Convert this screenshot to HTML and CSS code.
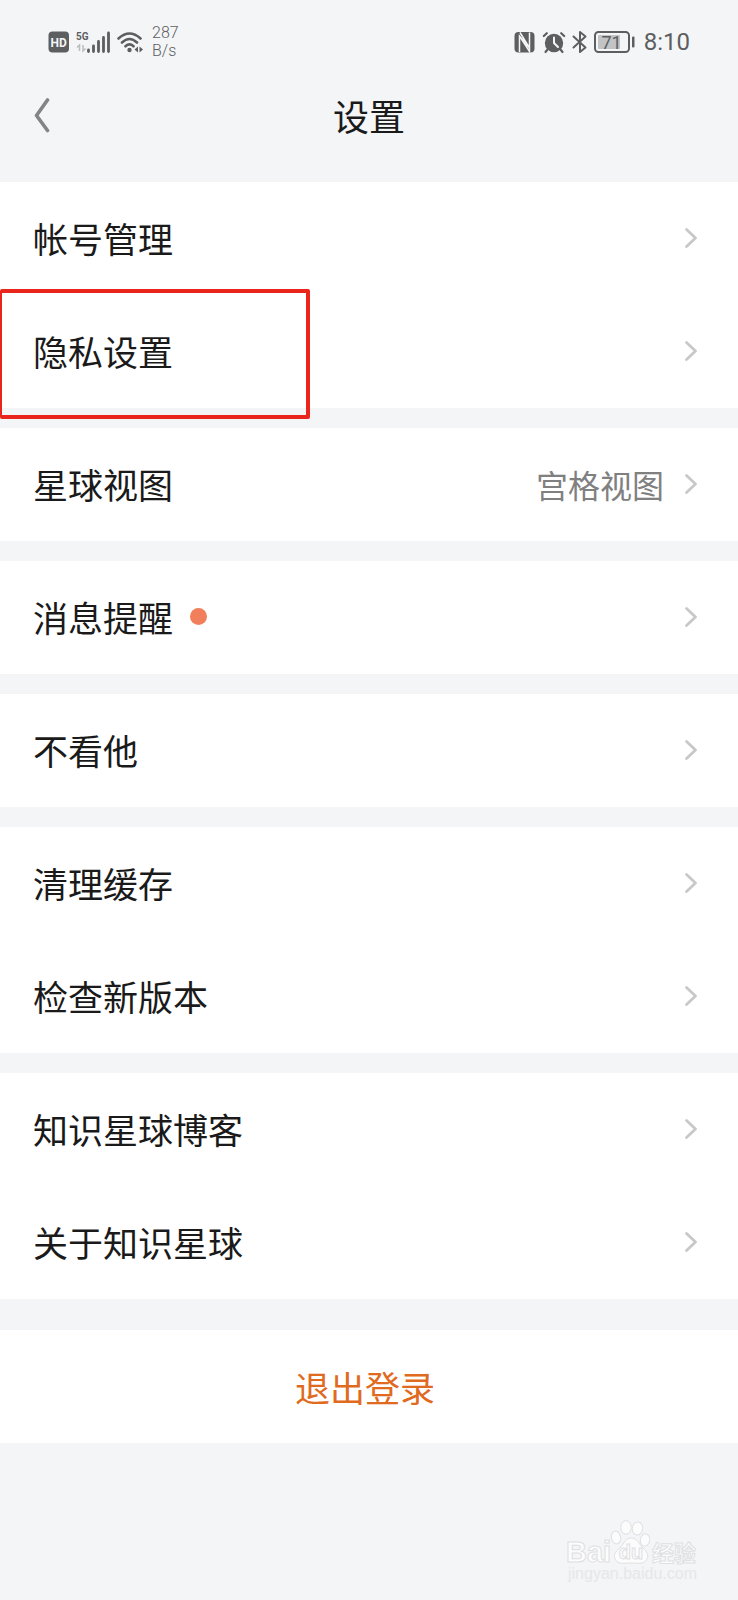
FILE: index.html
```
<!DOCTYPE html>
<html lang="zh-CN">
<head>
    <meta charset="UTF-8">
    <meta name="viewport" content="width=device-width, initial-scale=1">
    <title>设置</title>
    <link rel="stylesheet" href="styles.css">
</head>
<body>
<svg class="defs" width="0" height="0" aria-hidden="true">
    <symbol id="arrow" viewBox="0 0 14 22">
        <path d="M2.500 2.500 11.500 11 2.500 19.500" fill="none" stroke="currentColor" stroke-width="2.800" stroke-linecap="round" stroke-linejoin="round"/>
    </symbol>
</svg>
<div class="page">
    <!-- 状态栏 -->
    <div class="status">
        <div class="status-left">
            <svg width="22" height="22" viewBox="0 0 22 22">
                <rect x="0.500" y="0.500" width="20.500" height="21" rx="4" fill="#5d5e60"/>
                <text class="hd" x="10.700" y="15.500" text-anchor="middle">HD</text>
            </svg>
            <svg class="signal" width="36" height="24" viewBox="0 0 36 24">
                <text class="net" x="0" y="10">5G</text>
                <path d="M3.500 21v-6l-2.500 2.500M7 15v6l2.500-2.500" fill="none" stroke="#bbbcbe" stroke-width="1.500"/>
                <path d="M12.500 20v1.500M17.500 16v5.500M22.500 11.500v10M27.500 7.500v14M32.500 3v18.500" stroke="#5d5e60" stroke-width="2.800" stroke-linecap="round"/>
            </svg>
            <svg class="wifi" width="27" height="24" viewBox="0 0 27 24">
                <path d="M1.500 8.500Q12.500 -1.500 23.500 8.500M5 12.500Q12.500 5.500 20 12.500M8.500 16.300Q12.500 12.500 16.500 16.300" fill="none" stroke="#5d5e60" stroke-width="2.600" stroke-linecap="round"/>
                <circle cx="12.500" cy="20" r="2.200" fill="#5d5e60"/>
                <path d="M21 16.500v6l-3.500-3zM22.500 16.500v6l3.500-3z" fill="#5d5e60"/>
            </svg>
            <div class="speed"><span>287</span><span>B/s</span></div>
        </div>
        <div class="status-right">
            <svg width="22" height="22" viewBox="0 0 22 22">
                <rect x="0.500" y="1" width="20" height="20.500" rx="4" fill="#5d5e60"/>
                <path d="M5.500 21V5L15.500 17V6.500M6 1.500 15.500 17M5.500 5 15.500 20.500V1.500" fill="none" stroke="#f4f5f7" stroke-width="1.500"/>
            </svg>
            <svg width="24" height="23" viewBox="0 0 24 23">
                <circle cx="12" cy="12" r="9.200" fill="#5d5e60"/>
                <path d="M1.800 5 4.800 2.200M22.200 5 19.200 2.200M5.500 18.500 3.500 21M18.500 18.500l2 2.500" stroke="#5d5e60" stroke-width="2.200" stroke-linecap="round"/>
                <path d="M12 6.500V12l4 4" fill="none" stroke="#f4f5f7" stroke-width="2" stroke-linecap="round"/>
            </svg>
            <svg width="16" height="24" viewBox="0 0 16 24">
                <path d="M1.500 6.500 13.500 17.500 8 22V2L13.500 6.500 1.500 17.500" fill="none" stroke="#5d5e60" stroke-width="2" stroke-linejoin="round" stroke-linecap="round"/>
            </svg>
            <svg class="battery" width="42" height="22" viewBox="0 0 42 22">
                <rect x="1" y="1" width="34" height="20" rx="3.500" fill="none" stroke="#5d5e60" stroke-width="2"/>
                <rect x="4" y="4" width="22" height="14" rx="1" fill="#c2c3c5"/>
                <rect x="38" y="5.500" width="2.500" height="11" rx="1" fill="#5d5e60"/>
                <text class="level" x="17.500" y="17.500" text-anchor="middle">71</text>
            </svg>
            <span class="time">8:10</span>
        </div>
    </div>

    <!-- 标题 -->
    <header class="header">
        <button class="back" type="button" aria-label="返回">
            <svg width="16" height="36" viewBox="0 0 16 36">
                <path d="M13.500 3 2.500 18.500 13.500 33.500" fill="none" stroke="#838486" stroke-width="3.600" stroke-linecap="round" stroke-linejoin="round"/>
            </svg>
        </button>
        <h1 class="title">设置</h1>
    </header>

    <!-- 列表 -->
    <main class="list">
        <nav class="group">
            <a class="item" href="#"><span>帐号管理</span><svg class="arrow"><use href="#arrow"/></svg></a>
            <a class="item marked" href="#"><span>隐私设置</span><svg class="arrow"><use href="#arrow"/></svg></a>
        </nav>
        <nav class="group">
            <a class="item" href="#"><span>星球视图</span><span class="value">宫格视图</span><svg class="arrow"><use href="#arrow"/></svg></a>
        </nav>
        <nav class="group">
            <a class="item" href="#"><span>消息提醒</span><i class="dot"></i><svg class="arrow"><use href="#arrow"/></svg></a>
        </nav>
        <nav class="group">
            <a class="item" href="#"><span>不看他</span><svg class="arrow"><use href="#arrow"/></svg></a>
        </nav>
        <nav class="group">
            <a class="item" href="#"><span>清理缓存</span><svg class="arrow"><use href="#arrow"/></svg></a>
            <a class="item" href="#"><span>检查新版本</span><svg class="arrow"><use href="#arrow"/></svg></a>
        </nav>
        <nav class="group">
            <a class="item" href="#"><span>知识星球博客</span><svg class="arrow"><use href="#arrow"/></svg></a>
            <a class="item" href="#"><span>关于知识星球</span><svg class="arrow"><use href="#arrow"/></svg></a>
        </nav>
    </main>
    <button class="logout" type="button">退出登录</button>

    <!-- 水印 -->
    <footer class="mark">
        <svg width="134" height="70" viewBox="0 0 134 70">
            <g fill="#fcfcfd" stroke="#dfe0e2" stroke-width="1">
                <ellipse cx="50" cy="19.500" rx="4.700" ry="6.500" transform="rotate(-12 50 19.500)"/>
                <ellipse cx="60" cy="9.500" rx="5.200" ry="6.800"/>
                <ellipse cx="71.500" cy="10.500" rx="5.200" ry="6.500" transform="rotate(8 71.500 10.500)"/>
                <ellipse cx="79" cy="22" rx="4.700" ry="6.200" transform="rotate(10 79 22)"/>
                <path d="M65 20c6 0 8 6 12 10 4 4 6 7 4 11-3 6-9 4-16 4s-13 2-16-4c-2-4 1-8 5-11 4-4 5-10 11-10z"/>
                <text class="mark-bai" x="0" y="44">Bai</text>
                <text class="mark-cn" x="86" y="43">经验</text>
                <text class="mark-du" x="65" y="41" text-anchor="middle">du</text>
            </g>
            <text class="mark-url" x="2" y="61">jingyan.baidu.com</text>
        </svg>
    </footer>
</div>
</body>
</html>
```
FILE: styles.css
```
* {
    box-sizing: border-box;
}

body {
    margin: 0;
    background: #f4f5f7;
    color: #1a1a1a;
    font-family: "Noto Sans CJK SC", sans-serif;
}

a {
    color: inherit;
    text-decoration: none;
}

button {
    border: 0;
    padding: 0;
    font-family: inherit;
}

svg {
    display: block;
    flex: none;
}

.defs {
    position: absolute;
}

.page {
    display: flex;
    flex-direction: column;
    min-height: 100vh;
}

/* 状态栏 */
.status {
    display: flex;
    justify-content: space-between;
    height: 84px;
    padding: 0 48px;
    color: #5d5e60;
    font-family: Roboto, sans-serif;
}

.status-left,
.status-right {
    display: flex;
    align-items: center;
}

.signal {
    margin-left: 6px;
}

.wifi {
    margin-left: 5px;
}

.speed {
    display: flex;
    flex-direction: column;
    margin-left: 8px;
    font-size: 16px;
    font-weight: 300;
    line-height: 18px;
}

.status-right {
    gap: 6px;
}

.time {
    margin-left: 2px;
    font-size: 24px;
}

.hd {
    fill: #f4f5f7;
    stroke: none;
    font: bold 12px Roboto, sans-serif;
}

.net {
    fill: #5d5e60;
    font: bold 10px Roboto, sans-serif;
}

.level {
    fill: #5d5e60;
    font: 18px Roboto, sans-serif;
}

/* 标题 */
.header {
    display: grid;
    grid-template-columns: 1fr auto 1fr;
    align-items: center;
    height: 98px;
    padding: 0 34px 36px;
}

.back {
    justify-self: start;
    background: none;
}

.title {
    margin: 0;
    font-size: 36px;
    font-weight: 400;
    line-height: 52px;
}

/* 列表 */
.list {
    display: grid;
    gap: 20px;
}

.group {
    background: #fff;
}

.item {
    display: flex;
    align-items: center;
    height: 113px;
    padding: 0 40px 2px 33px;
    font-size: 35px;
}

.arrow {
    width: 14px;
    height: 22px;
    margin-left: auto;
    color: #c8c8c8;
}

.value {
    margin-left: auto;
    color: #808080;
    font-size: 32px;
}

.value + .arrow {
    margin-left: 20px;
}

.dot {
    width: 17px;
    height: 17px;
    margin-left: 17px;
    border-radius: 50%;
    background: #f27f5b;
}

/* 红框标出的一行 */
.marked {
    position: relative;
}

.marked::after {
    content: "";
    position: absolute;
    top: -6px;
    left: 0;
    z-index: 1;
    box-sizing: border-box;
    width: 310px;
    height: 130px;
    border: 4px solid #ea261c;
    border-left-width: 2px;
    border-radius: 2px;
}

.logout {
    height: 113px;
    margin-top: 31px;
    padding: 0 8px 0 0;
    background: #fff;
    color: #e06a20;
    font-size: 35px;
}

/* 水印 */
.mark {
    display: flex;
    justify-content: flex-end;
    margin-top: auto;
    padding: 0 38px 12px;
}

.mark-bai {
    font: bold 29px "Liberation Sans", sans-serif;
}

.mark-cn {
    font: bold 22px "Noto Sans CJK SC", sans-serif;
}

.mark-du {
    font: bold 20px "Liberation Sans", sans-serif;
}

.mark-url {
    fill: #e6e7e9;
    font: 16px "Liberation Sans", sans-serif;
}
```
